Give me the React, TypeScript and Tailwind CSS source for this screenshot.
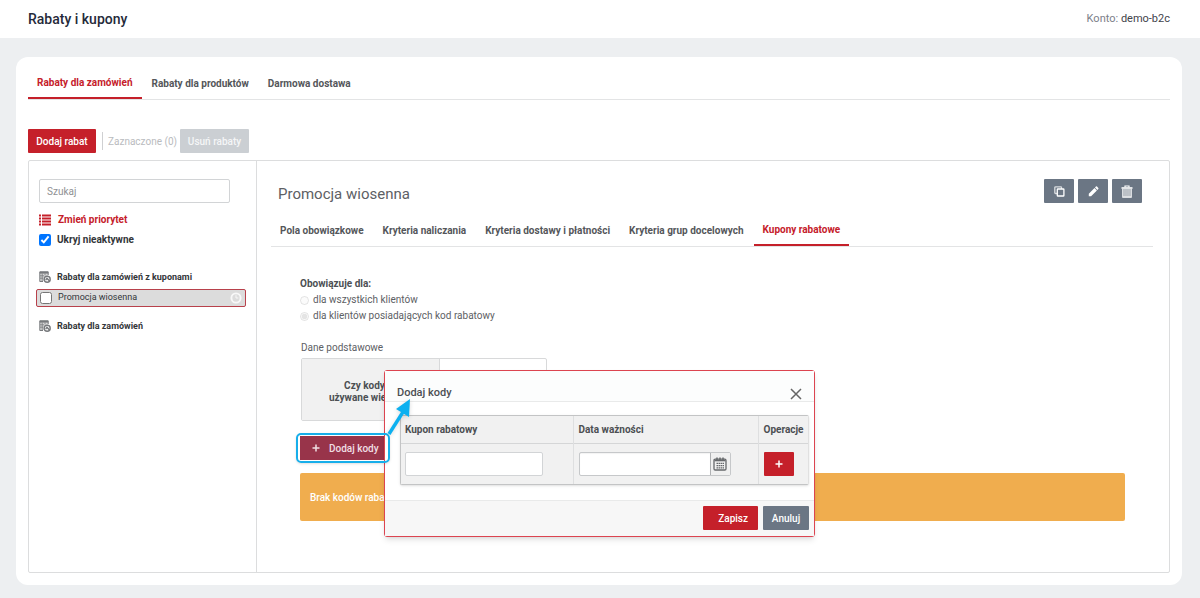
import { useState } from "react";
import type { ReactNode } from "react";

const MAIN_TABS = ["Rabaty dla zamówień", "Rabaty dla produktów", "Darmowa dostawa"];

const DISCOUNT_TABS = [
  "Pola obowiązkowe",
  "Kryteria naliczania",
  "Kryteria dostawy i płatności",
  "Kryteria grup docelowych",
  "Kupony rabatowe",
];

function Tabs({
  items,
  active,
  onSelect,
}: {
  items: string[];
  active: string;
  onSelect: (tab: string) => void;
}) {
  return (
    <div role="tablist" className="flex gap-px border-b border-[#e3e4e5] text-[10px] leading-3 font-bold">
      {items.map((tab) => (
        <button
          key={tab}
          type="button"
          role="tab"
          aria-selected={tab === active}
          onClick={() => onSelect(tab)}
          className={
            tab === active
              ? "border-b-2 border-[#c5202a] px-[9px] pb-2 text-[#c5202a]"
              : "px-[9px] pb-2 text-[#54565a]"
          }
        >
          {tab}
        </button>
      ))}
    </div>
  );
}

function IconButton({ label, children }: { label: string; children: ReactNode }) {
  return (
    <button
      type="button"
      aria-label={label}
      className="flex h-6 w-[30px] items-center justify-center rounded-[1px] bg-[#6b7684] text-white"
    >
      {children}
    </button>
  );
}

function CopyIcon() {
  return (
    <svg width="11" height="11" viewBox="0 0 11 11" fill="none" stroke="currentColor">
      <path d="M7.5 3V1.5a.7.7 0 0 0-.7-.7H1.7a.9.9 0 0 0-.9.9v5a.8.8 0 0 0 .8.8H3" strokeWidth="1.3" opacity=".75" />
      <rect x="3.3" y="3" width="6.6" height="7" rx=".6" strokeWidth="1.3" />
    </svg>
  );
}

function PencilIcon() {
  return (
    <svg width="11" height="11" viewBox="0 0 11 11" fill="currentColor">
      <path d="M.8 10.2V7.8L6.5 2l2.4 2.4-5.8 5.8zM7 1.5l.9-.9a.8.8 0 0 1 1.1 0L10.3 2a.8.8 0 0 1 0 1l-.9.9z" />
    </svg>
  );
}

function TrashIcon() {
  return (
    <svg width="12" height="14" viewBox="0 0 12 14" fill="none" stroke="currentColor">
      <path d="M.5 4h11" strokeWidth="1.6" />
      <path d="M4 3.2V2h4v1.2" strokeWidth="1.2" />
      <path d="M1.9 5v8.2h8.2V5" strokeWidth="1.3" />
      <path d="M4 5v8M6 5v8M8 5v8" strokeWidth="1.1" />
    </svg>
  );
}

function ListIcon() {
  return (
    <svg width="12" height="12" viewBox="0 0 12 12" fill="currentColor">
      <path d="M0 .5h2v2H0zM3 .5h9v2H3zM0 3.5h2v2H0zM3 3.5h9v2H3zM0 6.5h2v2H0zM3 6.5h9v2H3zM0 9.5h2v2H0zM3 9.5h9v2H3z" />
    </svg>
  );
}

function RuleGroupIcon() {
  return (
    <svg width="12" height="12" viewBox="0 0 12 12" fill="none" stroke="#77797c">
      <path d="M4 10.5H.8V.8h8.4V4" fill="#d8d8d8" />
      <path d="M.8 1.7h8.4" strokeWidth="1.8" />
      <path d="M1 4.8h4M1 7.2h3M3.2 2.5V10M6 2.5v1.8" strokeWidth=".8" />
      <circle cx="8.2" cy="8.3" r="3" fill="#fff" strokeWidth="1.4" />
      <path d="M6.7 9 8 7.4l3 3" strokeWidth="1.4" />
    </svg>
  );
}

function ClockIcon() {
  return (
    <svg width="12" height="12" viewBox="0 0 12 12" fill="none" stroke="#f8f8f8" strokeWidth="1.9">
      <circle cx="6" cy="6" r="4.6" />
      <path d="M6 3.2V6h2.3" strokeWidth="1" />
    </svg>
  );
}

function CalendarIcon() {
  return (
    <svg width="14" height="14" viewBox="0 0 14 14" fill="none" stroke="#66686b">
      <rect x="1" y="2.2" width="12" height="10.8" rx="1.2" strokeWidth="1.3" />
      <path d="M1.5 3.5h11" strokeWidth="1.6" />
      <path d="M4 .5v2.5M7 .5v2.5M10 .5v2.5" strokeWidth="1.5" />
      <path d="M3.5 6.3h7.5M3.5 8.6h7.5M3.5 10.9h7.5" strokeWidth="1.3" strokeDasharray="1.5 .5" />
    </svg>
  );
}

function PlusIcon() {
  return (
    <svg width="8" height="8" viewBox="0 0 8 8" stroke="currentColor" strokeWidth="1.5">
      <path d="M4 .5v7M.5 4h7" />
    </svg>
  );
}

function Sidebar() {
  const [hideInactive, setHideInactive] = useState(true);

  return (
    <aside className="flex w-[228px] shrink-0 flex-col border-r border-[#dcddde] px-[7px] pt-[18px] text-[#333639]">
      <input
        type="search"
        aria-label="Szukaj"
        placeholder="Szukaj"
        className="mr-[19px] ml-[3px] h-6 rounded-xs border border-[#d2d4d6] px-[7px] text-[10px] placeholder:text-[#8f9194]"
      />
      <a href="#priorytet" className="mt-[9px] ml-[3px] flex items-center gap-[7px] text-[10px] leading-4 font-bold text-[#c5202a]">
        <ListIcon />
        Zmień priorytet
      </a>
      <label className="mt-1 ml-[3px] flex items-center gap-1.5 text-[10px] leading-4 font-bold">
        <input
          type="checkbox"
          checked={hideInactive}
          onChange={(e) => setHideInactive(e.target.checked)}
          className="size-3"
        />
        Ukryj nieaktywne
      </label>

      <h3 className="mt-[21px] ml-[3px] flex items-center gap-1.5 text-[9px] leading-4 font-bold">
        <RuleGroupIcon />
        Rabaty dla zamówień z kuponami
      </h3>
      <div className="mt-1 mr-[3px] flex h-[18px] items-center rounded-xs border border-[#b8414b] bg-[#dcdcdc] px-[3px]">
        <label className="flex flex-1 items-center gap-1.5 text-[9px]">
          <input type="checkbox" className="size-3" />
          Promocja wiosenna
        </label>
        <ClockIcon />
      </div>
      <h3 className="mt-[11px] ml-[3px] flex items-center gap-1.5 text-[9px] leading-4 font-bold">
        <RuleGroupIcon />
        Rabaty dla zamówień
      </h3>
    </aside>
  );
}

/* "Dodaj kody" trigger with its highlight frame and the arrow to the dialog */
function AddCodesButton() {
  return (
    <div className="relative mt-[15px] w-[86px]">
      <button
        type="button"
        className="flex h-6 w-full items-center gap-[9px] bg-[#98344a] pl-3 text-[10px] font-medium text-[#f0dfe4]"
      >
        <PlusIcon />
        Dodaj kody
      </button>
      <div className="pointer-events-none absolute -inset-x-1 -inset-y-[3px] z-20 rounded-[5px] border-2 border-[#17aeea] shadow-sm" />
      <svg
        className="pointer-events-none absolute -top-[38px] left-[84px] z-20 drop-shadow-sm"
        width="30"
        height="40"
        viewBox="0 0 30 40"
      >
        <path d="M5 36 19 14" stroke="#0cb0f0" strokeWidth="3.4" />
        <path d="M26 1 25 19 12 11z" fill="#0cb0f0" />
      </svg>
    </div>
  );
}

function CouponSettings() {
  return (
    <div className="pt-[31px] pr-7 pl-[29px] text-[10px] text-[#5d6064]">
      <fieldset disabled>
        <legend className="leading-3 font-bold text-[#4c4f53]">Obowiązuje dla:</legend>
        <label className="mt-1 flex items-center gap-1 leading-3">
          <input type="radio" name="scope" className="size-[9px] opacity-60" />
          dla wszystkich klientów
        </label>
        <label className="mt-1 flex items-center gap-1 leading-3">
          <input type="radio" name="scope" defaultChecked className="size-[9px] opacity-60" />
          dla klientów posiadających kod rabatowy
        </label>
      </fieldset>

      <h3 className="mt-5 ml-px leading-3">Dane podstawowe</h3>
      <div className="mt-1 ml-px flex h-[63px] w-[246px] rounded-xs border border-[#d8d9da]">
        <div className="flex w-[138px] items-center justify-end border-r border-[#d8d9da] bg-[#f1f1f1] pt-1 pr-2">
          <p className="w-[110px] text-right leading-3 font-bold text-[#4c4f53]">
            Czy kody mogą być używane wielokrotnie?
          </p>
        </div>
      </div>

      <AddCodesButton />

      <div className="mt-[13px] flex h-12 items-center rounded-xs bg-[#f0ad4e] px-2.5 font-medium text-white">
        Brak kodów rabatowych
      </div>
    </div>
  );
}

function AddCodesDialog({ onClose }: { onClose: () => void }) {
  return (
    <div
      role="dialog"
      aria-labelledby="dialog-title"
      className="w-[431px] rounded-[3px] border border-[#dc4450] bg-white text-[#4c4f53] shadow-md"
    >
      <header className="flex h-[31px] items-end justify-between border-b border-[#e9eaea] bg-[#fcfdfd] px-3">
        <h2 id="dialog-title" className="text-[11px] leading-4 font-medium">
          Dodaj kody
        </h2>
        <button type="button" aria-label="Zamknij" onClick={onClose}>
          <svg width="12" height="13" viewBox="0 0 12 13" stroke="#666" strokeWidth="1.5">
            <path d="m1 1 10 10M11 1 1 11" />
          </svg>
        </button>
      </header>

      <div className="pt-[13px] pr-[5px] pb-[15px] pl-[15px]">
        <div className="rounded-xs border border-[#c3c4c5] border-r-[#e0e0e0] shadow-sm">
          <table className="w-full table-fixed border-collapse bg-[#f1f1f1] text-left text-[10px]">
            <thead>
              <tr className="h-[27px] border-b border-[#d5d6d7] font-bold">
                <th className="w-[172px] border-r border-[#dedfe0] px-1">Kupon rabatowy</th>
                <th className="border-r border-[#dedfe0] px-[5px]">Data ważności</th>
                <th className="w-[50px] px-[5px]">Operacje</th>
              </tr>
            </thead>
            <tbody>
              <tr className="h-[41px]">
                <td className="border-r border-[#dedfe0] px-1">
                  <input
                    type="text"
                    aria-label="Kupon rabatowy"
                    className="block h-6 w-[138px] rounded-xs border border-[#d2d4d6] bg-white px-1"
                  />
                </td>
                <td className="border-r border-[#dedfe0] px-[5px]">
                  <div className="flex h-6 w-[152px] rounded-xs border border-[#c6c8ca] bg-white">
                    <input type="text" aria-label="Data ważności" className="min-w-0 flex-1 px-1 inset-shadow-xs" />
                    <button
                      type="button"
                      aria-label="Wybierz datę"
                      className="flex w-5 items-center justify-center border-l border-[#b0b2b4] bg-[#f0f0f0]"
                    >
                      <CalendarIcon />
                    </button>
                  </div>
                </td>
                <td className="px-[5px]">
                  <button
                    type="button"
                    aria-label="Dodaj kupon"
                    className="flex h-6 w-[30px] items-center justify-center rounded-[1px] bg-[#c5202a] text-white"
                  >
                    <PlusIcon />
                  </button>
                </td>
              </tr>
            </tbody>
          </table>
        </div>
      </div>

      <footer className="flex justify-end gap-[5px] border-t border-[#e9eaea] bg-[#f7f7f7] px-[5px] pt-[5px] pb-1.5 text-[10px] font-medium text-white">
        <button type="button" className="h-6 w-[55px] rounded-[1px] bg-[#c5202a] pr-2.5 text-right">
          Zapisz
        </button>
        <button type="button" onClick={onClose} className="h-6 w-[46px] rounded-[1px] bg-[#6b7684]">
          Anuluj
        </button>
      </footer>
    </div>
  );
}

export default function App() {
  const [mainTab, setMainTab] = useState(MAIN_TABS[0]);
  const [discountTab, setDiscountTab] = useState(DISCOUNT_TABS[4]);
  const [dialogOpen, setDialogOpen] = useState(true);

  return (
    <div className="relative min-h-screen bg-[#edeff1] font-['Roboto',sans-serif]">
      <header className="flex h-[38px] items-center justify-between bg-white pr-[30px] pl-7">
        <h1 className="text-sm font-medium text-[#252a3a]">Rabaty i kupony</h1>
        <p className="text-[11px] text-[#7c808a]">
          Konto: <span className="text-[#3f434b]">demo-b2c</span>
        </p>
      </header>

      <main className="mt-[19px] mr-[18px] ml-4 rounded-xl bg-white px-3 pt-5 pb-3">
        <Tabs items={MAIN_TABS} active={mainTab} onSelect={setMainTab} />

        <div className="mt-[29px] flex items-center text-[10px] font-medium">
          <button type="button" className="h-6 w-[68px] rounded-[1px] bg-[#c5202a] text-white">
            Dodaj rabat
          </button>
          <span className="ml-1.5 h-[18px] border-l border-[#cfd0d2]" />
          <span className="ml-[5px] font-normal text-[#b9bbbe]">Zaznaczone (0)</span>
          <button type="button" disabled className="ml-[3px] h-6 w-[69px] rounded-[1px] bg-[#cbcfd3] text-[#f5f6f7]">
            Usuń rabaty
          </button>
        </div>

        <div className="mt-[7px] flex min-h-[413px] rounded-xs border border-[#dcddde]">
          <Sidebar />

          <section className="min-w-0 flex-1 pr-4 pl-3.5">
            <div className="flex items-start justify-between pt-[18px] pr-[11px] pl-[7px]">
              <h2 className="pt-[5px] text-[15px] leading-5 text-[#5d6064]">Promocja wiosenna</h2>
              <div className="flex gap-1">
                <IconButton label="Kopiuj">
                  <CopyIcon />
                </IconButton>
                <IconButton label="Edytuj">
                  <PencilIcon />
                </IconButton>
                <IconButton label="Usuń">
                  <TrashIcon />
                </IconButton>
              </div>
            </div>

            <div className="mt-5">
              <Tabs items={DISCOUNT_TABS} active={discountTab} onSelect={setDiscountTab} />
            </div>
            <CouponSettings />
          </section>
        </div>
      </main>

      {dialogOpen && (
        <div className="absolute inset-x-0 top-[370px] z-10 flex justify-center pr-px">
          <AddCodesDialog onClose={() => setDialogOpen(false)} />
        </div>
      )}
    </div>
  );
}
